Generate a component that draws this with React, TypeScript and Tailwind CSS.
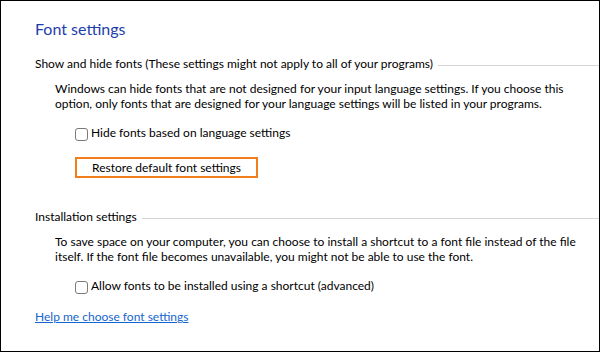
const FONT = "font-['Lato',_'Noto_Sans',_sans-serif]";

function GroupHeading({ label }: { label: string }) {
  return (
    <div className="flex h-[15px]">
      <span className="text-[12px] leading-[15px] text-black whitespace-nowrap">{label}</span>
      <div className="flex-1 h-px mt-[9px] ml-[5px] bg-[#d4d4d4]" />
    </div>
  );
}

function Checkbox({ label }: { label: string }) {
  return (
    <label className="flex items-start gap-[3px] pl-[40px] h-[15px]">
      <span className="mt-[3px] w-[13px] h-[13px] shrink-0 rounded-[3px] border border-[#7a7a7a] bg-white" />
      <span className="text-[12px] leading-[15px] text-black whitespace-nowrap">{label}</span>
    </label>
  );
}

export default function App() {
  return (
    <div className={`${FONT} w-[600px] h-[352px] bg-white border border-black pl-[34px] pt-[16px] overflow-hidden`}>
      <h1 className="text-[16px] leading-[24px] text-[#1c3eac]">Font settings</h1>

      <div className="mt-[15px]">
        <GroupHeading label="Show and hide fonts (These settings might not apply to all of your programs)" />
        <p className="mt-[10px] pl-[20px] text-[12px] leading-[15px] text-black whitespace-nowrap">
          Windows can hide fonts that are not designed for your input language settings. If you choose this
          <br />
          option, only fonts that are designed for your language settings will be listed in your programs.
        </p>
        <div className="mt-[14px]">
          <Checkbox label="Hide fonts based on language settings" />
        </div>
        <div className="mt-[17px] pl-[40px]">
          <button className="flex items-center justify-center w-[183px] h-[21px] border-2 border-[#f27e1b] bg-white text-[12px] leading-[15px] text-black">
            Restore default font settings
          </button>
        </div>
      </div>

      <div className="mt-[31px]">
        <GroupHeading label="Installation settings" />
        <p className="mt-[10px] pl-[20px] text-[12px] leading-[15px] text-black whitespace-nowrap">
          To save space on your computer, you can choose to install a shortcut to a font file instead of the file
          <br />
          itself. If the font file becomes unavailable, you might not be able to use the font.
        </p>
        <div className="mt-[14px]">
          <Checkbox label="Allow fonts to be installed using a shortcut (advanced)" />
        </div>
      </div>

      <a href="#" className="block mt-[16px] w-fit text-[12px] leading-[15px] text-[#1565d0] underline">
        Help me choose font settings
      </a>
    </div>
  );
}
